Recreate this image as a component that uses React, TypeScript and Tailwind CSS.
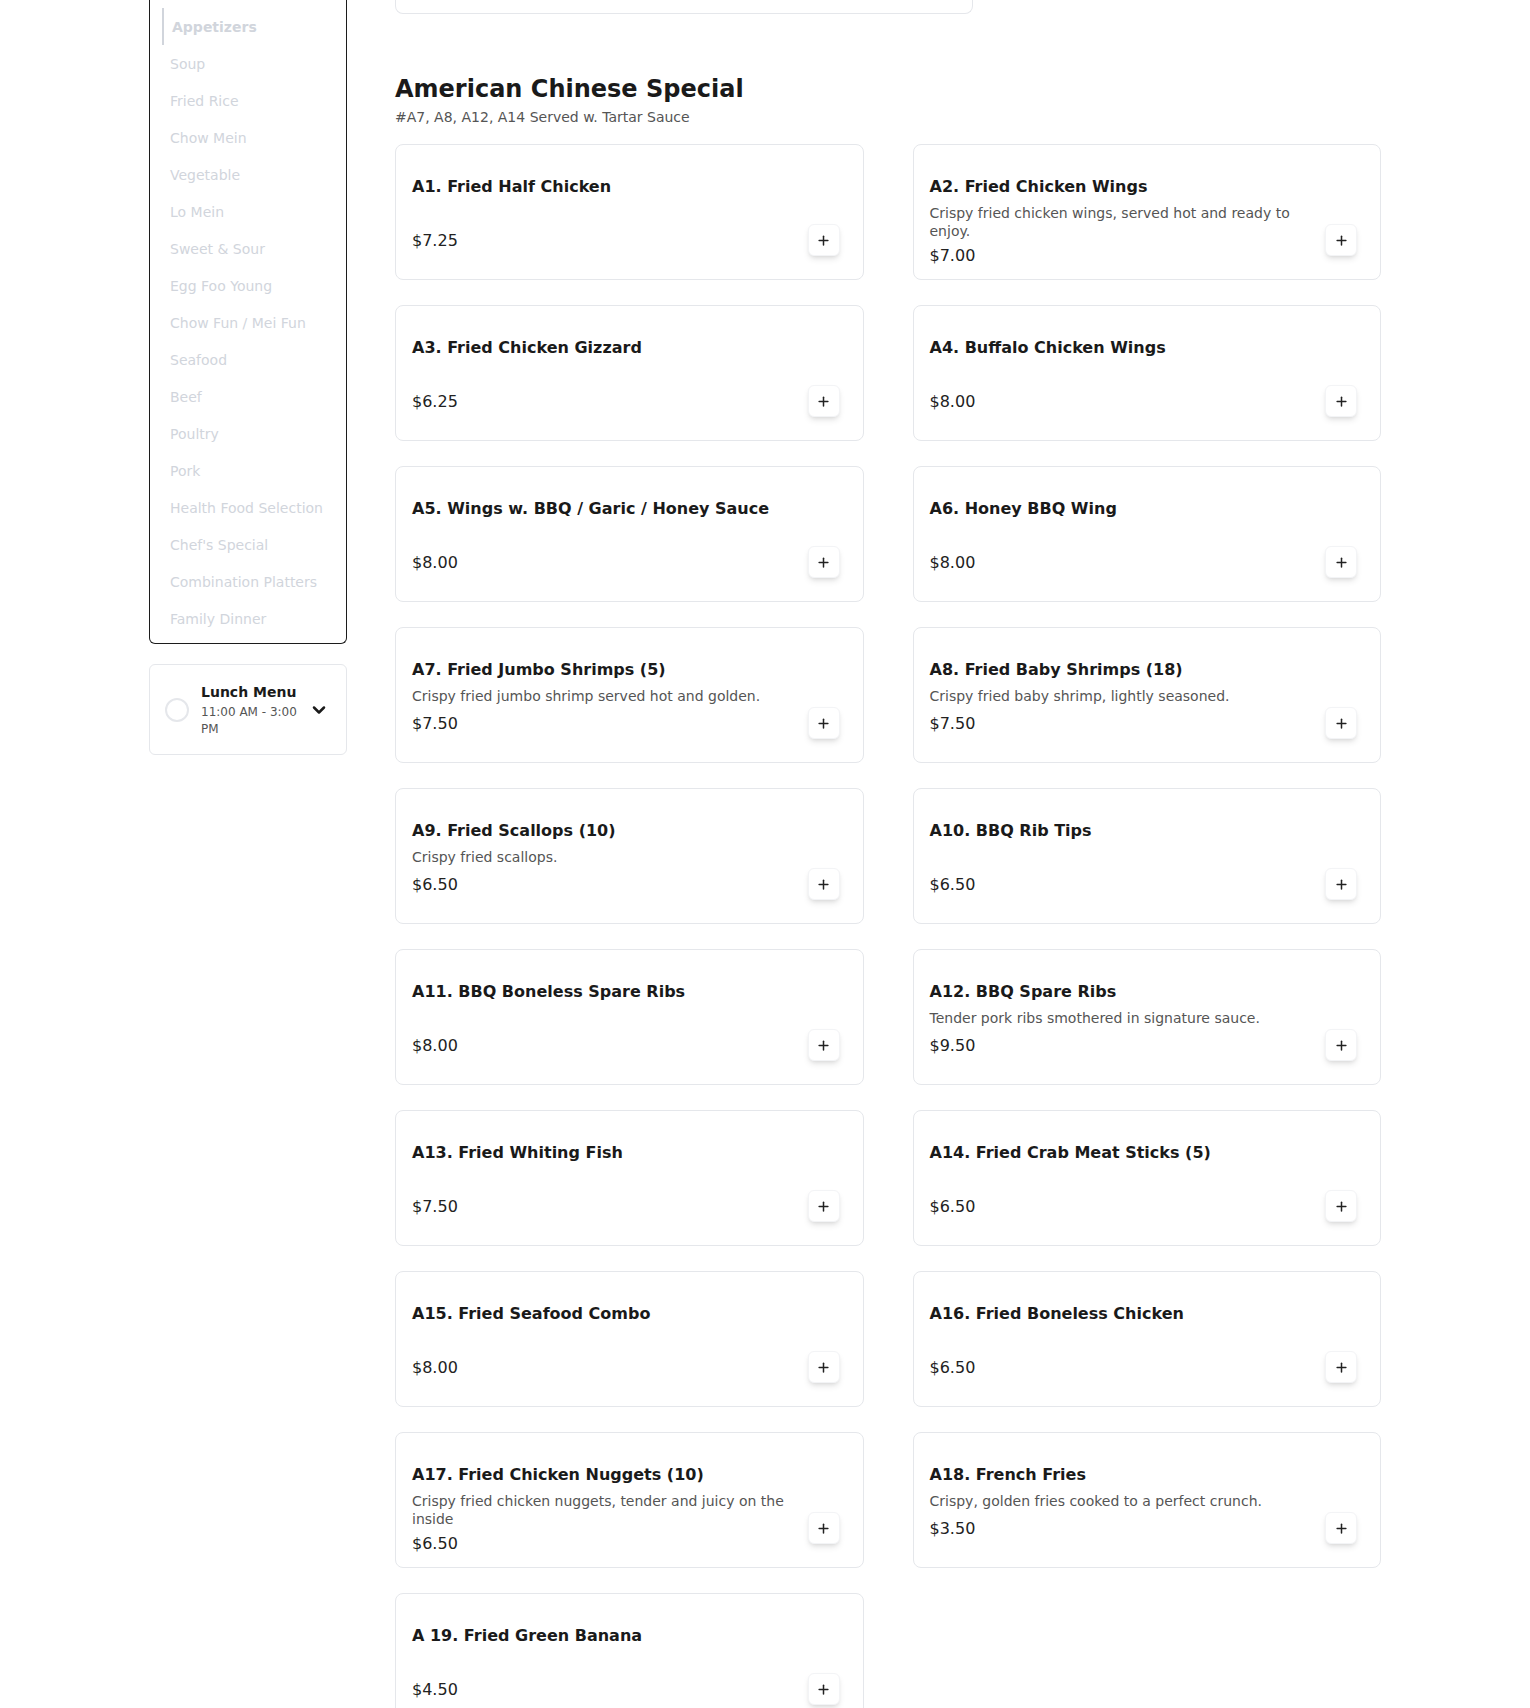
import React from "react";
import { ChevronDown, Plus } from "lucide-react";

type Item = { name: string; desc?: string; price: string };

const categories = [
  "Appetizers",
  "Soup",
  "Fried Rice",
  "Chow Mein",
  "Vegetable",
  "Lo Mein",
  "Sweet & Sour",
  "Egg Foo Young",
  "Chow Fun / Mei Fun",
  "Seafood",
  "Beef",
  "Poultry",
  "Pork",
  "Health Food Selection",
  "Chef's Special",
  "Combination Platters",
  "Family Dinner",
];

const items: Item[] = [
  { name: "A1. Fried Half Chicken", price: "$7.25" },
  { name: "A2. Fried Chicken Wings", desc: "Crispy fried chicken wings, served hot and ready to\nenjoy.", price: "$7.00" },
  { name: "A3. Fried Chicken Gizzard", price: "$6.25" },
  { name: "A4. Buffalo Chicken Wings", price: "$8.00" },
  { name: "A5. Wings w. BBQ / Garic / Honey Sauce", price: "$8.00" },
  { name: "A6. Honey BBQ Wing", price: "$8.00" },
  { name: "A7. Fried Jumbo Shrimps (5)", desc: "Crispy fried jumbo shrimp served hot and golden.", price: "$7.50" },
  { name: "A8. Fried Baby Shrimps (18)", desc: "Crispy fried baby shrimp, lightly seasoned.", price: "$7.50" },
  { name: "A9. Fried Scallops (10)", desc: "Crispy fried scallops.", price: "$6.50" },
  { name: "A10. BBQ Rib Tips", price: "$6.50" },
  { name: "A11. BBQ Boneless Spare Ribs", price: "$8.00" },
  { name: "A12. BBQ Spare Ribs", desc: "Tender pork ribs smothered in signature sauce.", price: "$9.50" },
  { name: "A13. Fried Whiting Fish", price: "$7.50" },
  { name: "A14. Fried Crab Meat Sticks (5)", price: "$6.50" },
  { name: "A15. Fried Seafood Combo", price: "$8.00" },
  { name: "A16. Fried Boneless Chicken", price: "$6.50" },
  { name: "A17. Fried Chicken Nuggets (10)", desc: "Crispy fried chicken nuggets, tender and juicy on the inside", price: "$6.50" },
  { name: "A18. French Fries", desc: "Crispy, golden fries cooked to a perfect crunch.", price: "$3.50" },
  { name: "A 19. Fried Green Banana", price: "$4.50" },
];

function Card({ item }: { item: Item }) {
  return (
    <div className="flex h-[136px] gap-4 rounded-lg border border-gray-200 bg-white pl-4 pr-[23px] pt-[30px] pb-[23px]">
      <div className="min-w-0 flex-1">
        <div className="text-base font-bold leading-6 text-[#1a1a1a]">{item.name}</div>
        <div className="mt-1.5 min-h-5 whitespace-pre-line text-sm leading-[17.5px] text-[#555]">
          {item.desc ?? ""}
        </div>
        <div className="mt-1 text-base leading-6 text-[#222]">{item.price}</div>
      </div>
      <button className="flex h-8 w-8 shrink-0 items-center justify-center self-end rounded-md border border-gray-100 bg-white text-[#222] shadow-md">
        <Plus size={15} strokeWidth={2.4} />
      </button>
    </div>
  );
}

export default function App() {
  return (
    <div className="min-h-screen bg-white font-['DejaVu_Sans',sans-serif]">
      <div className="mx-auto flex max-w-7xl gap-12 px-6">
        <aside className="w-[198px] shrink-0">
          <div className="rounded-b-md border border-t-0 border-[#1c1c1c] pt-2 pb-1.5">
            {categories.map((c, i) => (
              <div
                key={c}
                className={
                  i === 0
                    ? "ml-3 flex h-[37px] items-center border-l-2 border-gray-300 pl-2 text-sm font-bold text-gray-300"
                    : "ml-3 flex h-[37px] items-center pl-2 text-sm text-gray-300"
                }
              >
                {c}
              </div>
            ))}
          </div>
          <div className="mt-5 flex items-center rounded-md border border-gray-200 pt-[17px] pb-4 pl-[15px]">
            <div className="h-6 w-6 shrink-0 rounded-full border-2 border-gray-200" />
            <div className="ml-3 w-[100px]">
              <div className="text-sm font-bold leading-5 text-[#1a1a1a]">Lunch Menu</div>
              <div className="mt-0.5 text-xs leading-[17px] text-[#555]">11:00 AM - 3:00 PM</div>
            </div>
            <ChevronDown size={20} strokeWidth={3} className="ml-2 text-[#1a1a1a]" />
          </div>
        </aside>
        <main className="min-w-0 flex-1">
          <div className="h-[14px] w-[578px] rounded-b-lg border border-t-0 border-gray-200" />
          <h2 className="mt-[59px] text-2xl font-bold leading-8 text-[#1a1a1a]">American Chinese Special</h2>
          <p className="mt-[2px] text-sm leading-5 text-[#555]">#A7, A8, A12, A14 Served w. Tartar Sauce</p>
          <div className="mt-[17px] grid grid-cols-2 gap-x-[49px] gap-y-[25px]">
            {items.map((it) => (
              <Card key={it.name} item={it} />
            ))}
          </div>
        </main>
      </div>
    </div>
  );
}
